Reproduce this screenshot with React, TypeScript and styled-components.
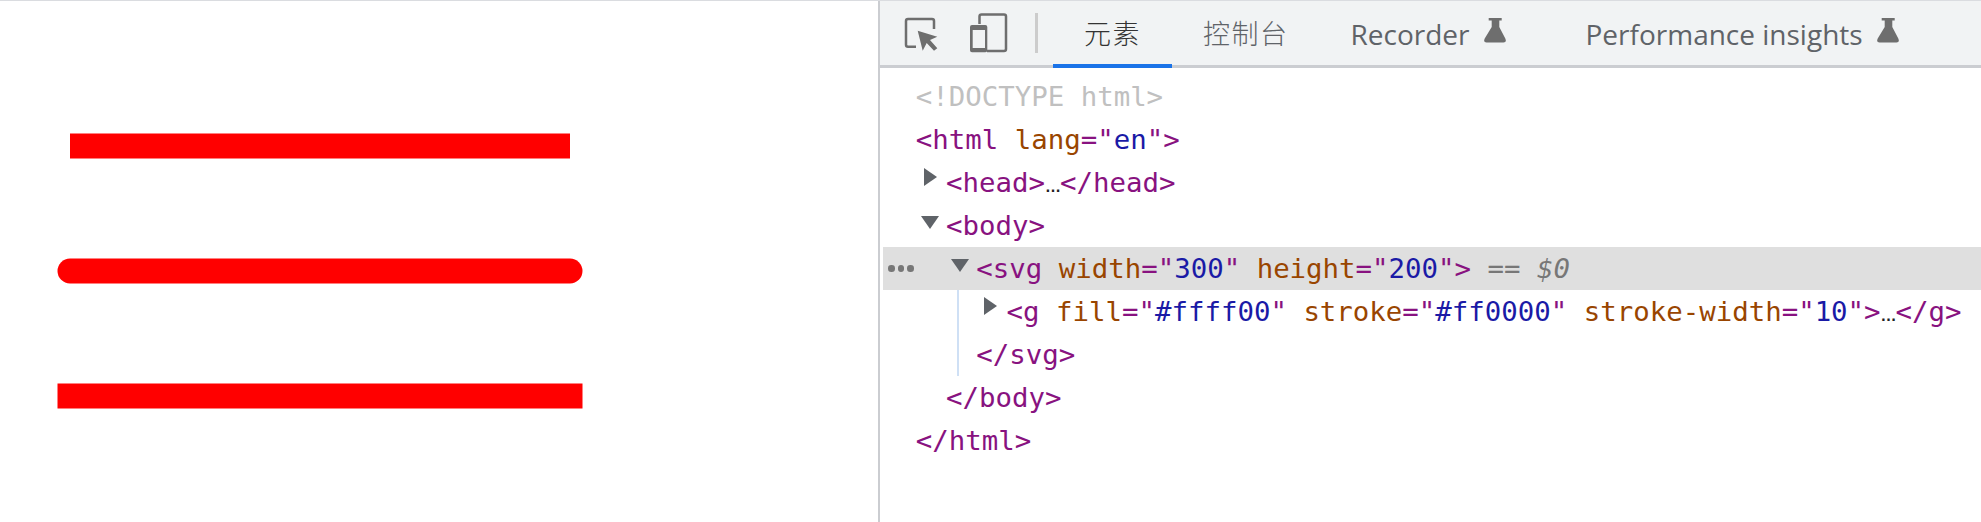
import React from 'react';
import styled, { createGlobalStyle } from 'styled-components';

const GlobalStyle = createGlobalStyle`
  html, body {
    margin: 0;
    padding: 0;
    background-color: #fff;
  }
`;

const Screen = styled.div`
  display: flex;
  width: 1981px;
  height: 522px;
  overflow: hidden;
  border-top: 1px solid #dadce0;
  box-sizing: border-box;
`;

const Page = styled.div`
  flex: none;
  width: 878px;
  padding: 20px;
  box-sizing: border-box;
  svg {
    display: block;
  }
`;

const DevTools = styled.div`
  flex: 1;
  border-left: 2px solid #cbcdd1;
  min-width: 0;
`;

const Toolbar = styled.div`
  display: flex;
  align-items: stretch;
  height: 67px;
  box-sizing: border-box;
  background-color: #f1f3f4;
  border-bottom: 3px solid #cbcdd1;
`;

const ToolIcons = styled.div`
  display: flex;
  align-items: center;
  padding-left: 20px;
  svg {
    display: block;
    flex: none;
  }
`;

const Divider = styled.div`
  width: 3px;
  height: 40px;
  margin: 0 15px 0 25px;
  background-color: #cccccc;
`;

const Tab = styled.div<{ $active?: boolean }>`
  display: flex;
  align-items: center;
  padding: 3px 31px 0;
  height: 67px;
  box-sizing: border-box;
  color: ${(p) => (p.$active ? '#333' : '#5f6368')};
  font-family: 'Open Sans', 'Noto Sans CJK SC', sans-serif;
  font-size: 28px;
  font-weight: 400;
  border-bottom: 4px solid ${(p) => (p.$active ? '#1a73e8' : 'transparent')};
  white-space: nowrap;
`;

const CjkLabel = styled.span`
  font-family: 'Noto Sans CJK SC', sans-serif;
  font-weight: 300;
  font-size: 27px;
  letter-spacing: 1.5px;
  margin-top: -4px;
`;

const Flask = styled.svg`
  display: block;
  flex: none;
  margin: -7px 18px 0 14px;
`;

const Tree = styled.div`
  padding-top: 7px;
  font-family: 'DejaVu Sans Mono', monospace;
  font-size: 27.4px;
  color: #881280;
`;

const Row = styled.div<{ $depth: number; $selected?: boolean }>`
  position: relative;
  display: flex;
  align-items: center;
  height: 43px;
  margin-left: 3px;
  padding-left: ${(p) => 2.5 + p.$depth * 30.25}px;
  background-color: ${(p) => (p.$selected ? '#dfdfdf' : 'transparent')};
  white-space: pre;
`;

const ToggleSlot = styled.span`
  display: flex;
  flex: none;
  width: 30.25px;
`;

const Triangle = styled.span<{ $open?: boolean }>`
  width: 0;
  height: 0;
  margin-top: ${(p) => (p.$open ? '-6px' : '-11px')};
  ${(p) =>
    p.$open
      ? `
    margin-left: 5px;
    border-left: 9.5px solid transparent;
    border-right: 9.5px solid transparent;
    border-top: 13px solid #5f6368;
  `
      : `
    margin-left: 8px;
    border-top: 9px solid transparent;
    border-bottom: 9px solid transparent;
    border-left: 13px solid #5f6368;
  `}
`;

const Tag = styled.span`
  color: #881280;
`;

const AttrName = styled.span`
  color: #994500;
`;

const AttrValue = styled.span`
  color: #1a1aa6;
`;

const Doctype = styled.span`
  color: #c0c0c0;
`;

const Ellipsis = styled.span`
  font-family: 'Liberation Sans', sans-serif;
  font-size: 16px;
  font-weight: 700;
  letter-spacing: -1px;
  color: #222;
  align-self: flex-end;
  padding-bottom: 8px;
`;

const Marker = styled.span`
  color: #777;
  font-style: italic;
`;

const Dots = styled.span`
  position: absolute;
  left: 5px;
  top: 18px;
  display: flex;
  gap: 3px;
  i {
    width: 6.5px;
    height: 6.5px;
    border-radius: 50%;
    background-color: #777;
  }
`;

const Children = styled.div`
  position: relative;
  &::before {
    content: '';
    position: absolute;
    left: 77px;
    top: 0;
    bottom: 0;
    width: 2px;
    background-color: #cfe0f5;
  }
`;

const Attr: React.FC<{ name: string; value: string }> = ({ name, value }) => (
  <>
    {' '}
    <AttrName>{name}</AttrName>="<AttrValue>{value}</AttrValue>"
  </>
);

const FlaskIcon = () => (
  <Flask width="22" height="25" viewBox="0 0 22 25">
    <path
      d="M4.7 0H17.7V2.4H15.3V9L21.3 20.5Q23 24.5 19.5 24.5H2.5Q-1 24.5 .7 20.5L7.7 9V2.4H4.7Z"
      fill="#6e6e6e"
    />
  </Flask>
);

const App: React.FC = () => {
  return (
    <>
      <GlobalStyle />
      <Screen>
        <Page>
          <svg width="750" height="500" viewBox="0 0 300 200">
            <g fill="#ffff00" stroke="#ff0000" strokeWidth="10">
              <path strokeLinecap="butt" d="M20 50 L220 50" />
              <path strokeLinecap="round" d="M20 100 L220 100" />
              <path strokeLinecap="square" d="M20 150 L220 150" />
            </g>
          </svg>
        </Page>
        <DevTools>
          <Toolbar>
            <ToolIcons>
              <svg width="40" height="40" viewBox="0 0 40 40">
                <path
                  d="M16 33.7H8a2 2 0 0 1-2-2V8a2 2 0 0 1 2-2H32a2 2 0 0 1 2 2V16"
                  fill="none"
                  stroke="#6e6e6e"
                  strokeWidth="2.5"
                />
                <path
                  d="M17.7 17.7L37.3 23.7L30 27L37.3 35.3L34 37.7L26.7 30L22.7 37.7Z"
                  fill="#6e6e6e"
                />
              </svg>
              <svg width="42" height="44" viewBox="0 0 42 44" style={{ marginLeft: 28 }}>
                <path
                  d="M11.5 13V5.5a2 2 0 0 1 2-2H36a2 2 0 0 1 2 2V38a2 2 0 0 1-2 2H19"
                  fill="none"
                  stroke="#6e6e6e"
                  strokeWidth="2.5"
                />
                <path
                  fillRule="evenodd"
                  d="M4 14H17.3a2 2 0 0 1 2 2V39.3a2 2 0 0 1-2 2H4a2 2 0 0 1-2-2V16a2 2 0 0 1 2-2ZM4.7 19V37H17V19Z"
                  fill="#6e6e6e"
                />
              </svg>
              <Divider />
            </ToolIcons>
            <Tab $active>
              <CjkLabel>元素</CjkLabel>
            </Tab>
            <Tab>
              <CjkLabel>控制台</CjkLabel>
            </Tab>
            <Tab>
              Recorder
              <FlaskIcon />
            </Tab>
            <Tab>
              Performance insights
              <FlaskIcon />
            </Tab>
          </Toolbar>
          <Tree>
            <Row $depth={0}>
              <ToggleSlot />
              <Doctype>&lt;!DOCTYPE html&gt;</Doctype>
            </Row>
            <Row $depth={0}>
              <ToggleSlot />
              <Tag>
                &lt;html
                <Attr name="lang" value="en" />
                &gt;
              </Tag>
            </Row>
            <Row $depth={1}>
              <ToggleSlot>
                <Triangle />
              </ToggleSlot>
              <Tag>&lt;head&gt;</Tag>
              <Ellipsis>…</Ellipsis>
              <Tag>&lt;/head&gt;</Tag>
            </Row>
            <Row $depth={1}>
              <ToggleSlot>
                <Triangle $open />
              </ToggleSlot>
              <Tag>&lt;body&gt;</Tag>
            </Row>
            <Row $depth={2} $selected>
              <Dots>
                <i />
                <i />
                <i />
              </Dots>
              <ToggleSlot>
                <Triangle $open />
              </ToggleSlot>
              <Tag>
                &lt;svg
                <Attr name="width" value="300" />
                <Attr name="height" value="200" />
                &gt;
              </Tag>
              <Marker> == $0</Marker>
            </Row>
            <Children>
              <Row $depth={3}>
                <ToggleSlot>
                  <Triangle />
                </ToggleSlot>
                <Tag>
                  &lt;g
                  <Attr name="fill" value="#ffff00" />
                  <Attr name="stroke" value="#ff0000" />
                  <Attr name="stroke-width" value="10" />
                  &gt;
                </Tag>
                <Ellipsis>…</Ellipsis>
                <Tag>&lt;/g&gt;</Tag>
              </Row>
              <Row $depth={2}>
                <ToggleSlot />
                <Tag>&lt;/svg&gt;</Tag>
              </Row>
            </Children>
            <Row $depth={1}>
              <ToggleSlot />
              <Tag>&lt;/body&gt;</Tag>
            </Row>
            <Row $depth={0}>
              <ToggleSlot />
              <Tag>&lt;/html&gt;</Tag>
            </Row>
          </Tree>
        </DevTools>
      </Screen>
    </>
  );
};

export default App;
